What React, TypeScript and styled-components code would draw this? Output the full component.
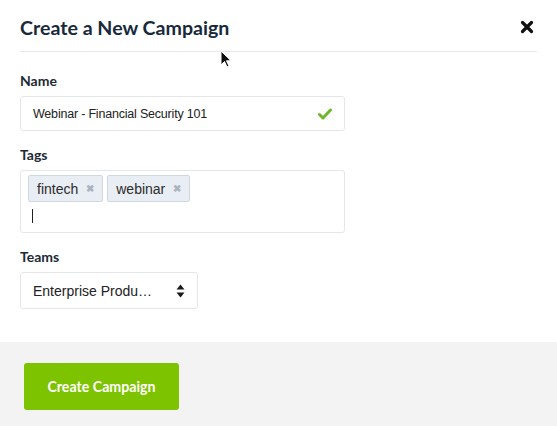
import React from "react";
import styled, { createGlobalStyle } from "styled-components";

const Global = createGlobalStyle`
  html, body { margin: 0; padding: 0; background: #fff; }
  body { width: 557px; height: 426px; overflow: hidden; font-family: "Liberation Sans", Arial, sans-serif; }
`;

const Modal = styled.div`
  position: relative;
  width: 557px;
  height: 426px;
  display: flex;
  flex-direction: column;
  background: #fff;
`;

const Header = styled.div`
  margin: 0 20px;
  height: 52px;
  border-bottom: 1px solid #e6e8ea;
  display: flex;
  align-items: center;
  justify-content: space-between;
  box-sizing: border-box;
  padding-top: 3px;
`;

const Title = styled.h1`
  margin: 0;
  font-family: Lato, "Open Sans", sans-serif;
  font-weight: 700;
  font-size: 19.6px;
  color: #17293a;
`;

const Close = styled.button`
  border: 0;
  background: none;
  padding: 0;
  width: 14px;
  height: 14px;
  margin-right: 3px;
  display: flex;
  cursor: pointer;
`;

const Body = styled.div`
  flex: 1;
  padding: 21px 20px 0;
  display: flex;
  flex-direction: column;
`;

const Field = styled.div`
  display: flex;
  flex-direction: column;
  margin-bottom: 16px;
`;

const Label = styled.label`
  font-family: Lato, "Open Sans", sans-serif;
  font-weight: 700;
  font-size: 14px;
  color: #1d2a35;
  line-height: 16px;
  margin-bottom: 7px;
`;

const Box = styled.div<{ $w: number; $h: number; $fs: number }>`
  width: ${(p) => p.$w}px;
  height: ${(p) => p.$h}px;
  box-sizing: border-box;
  border: 1px solid #e4e7ea;
  border-radius: 3px;
  background: #fff;
  display: flex;
  align-items: center;
  padding: 0 12px;
  font-size: ${(p) => p.$fs}px;
  letter-spacing: ${(p) => (p.$fs < 13 ? "-0.2px" : "0")};
  color: #222;
`;

const Value = styled.span`
  flex: 1;
`;

const TagBox = styled.div`
  width: 325px;
  height: 63px;
  box-sizing: border-box;
  border: 1px solid #e4e7ea;
  border-radius: 3px;
  padding: 4px 7px;
  display: flex;
  flex-direction: column;
  gap: 7px;
`;

const TagRow = styled.div`
  display: flex;
  gap: 4px;
`;

const Tag = styled.span`
  height: 27px;
  box-sizing: border-box;
  background: #e9eef4;
  border: 1px solid #cfd8e2;
  border-radius: 2px;
  display: flex;
  align-items: center;
  padding: 0 8px;
  gap: 8px;
  font-size: 14px;
  color: #2b2b2b;
`;

const TagX = styled.span`
  font-size: 10px;
  color: #aab4c0;
  font-weight: 700;
  line-height: 1;
`;

const Caret = styled.span`
  display: block;
  width: 1px;
  height: 14px;
  margin-left: 4px;
  background: #222;
`;

const Footer = styled.div`
  height: 84px;
  background: #f3f3f4;
  padding: 21px 24px 0;
  box-sizing: border-box;
`;

const Button = styled.button`
  width: 155px;
  height: 47px;
  border: 0;
  border-radius: 3px;
  background: #7dc300;
  color: #fff;
  font-family: Lato, "Open Sans", sans-serif;
  font-weight: 700;
  font-size: 14.2px;
  cursor: pointer;
`;

const Pointer = styled.svg`
  position: absolute;
  left: 220px;
  top: 50px;
`;

export default function App() {
  return (
    <Modal>
      <Global />
      <Header>
        <Title>Create a New Campaign</Title>
        <Close aria-label="Close">
          <svg width="14" height="14" viewBox="0 0 14 14">
            <path d="M2.5 2.5 L11.5 11.5 M11.5 2.5 L2.5 11.5" stroke="#111" strokeWidth="3.2" strokeLinecap="round" />
          </svg>
        </Close>
      </Header>
      <Body>
        <Field>
          <Label>Name</Label>
          <Box $w={325} $h={35} $fs={12.5}>
            <Value>Webinar - Financial Security 101</Value>
            <svg width="14" height="12" viewBox="0 0 14 12">
              <path d="M1.5 6.5 L5 10 L12.5 2" fill="none" stroke="#6fb62b" strokeWidth="3" strokeLinecap="round" strokeLinejoin="round" />
            </svg>
          </Box>
        </Field>
        <Field>
          <Label>Tags</Label>
          <TagBox>
            <TagRow>
              <Tag>fintech<TagX>✖</TagX></Tag>
              <Tag>webinar<TagX>✖</TagX></Tag>
            </TagRow>
            <Caret />
          </TagBox>
        </Field>
        <Field>
          <Label>Teams</Label>
          <Box $w={178} $h={37} $fs={14}>
            <Value>Enterprise Produ…</Value>
            <svg width="9" height="14" viewBox="0 0 9 14">
              <path d="M4.5 0.5 L8.5 5.5 L0.5 5.5 Z M4.5 13.5 L8.5 8.5 L0.5 8.5 Z" fill="#1a1a1a" />
            </svg>
          </Box>
        </Field>
      </Body>
      <Footer>
        <Button>Create Campaign</Button>
      </Footer>
      <Pointer width="12" height="19" viewBox="0 0 12 19">
        <path d="M1 1 L1 15 L4.5 11.5 L7 17 L9 16 L6.5 10.8 L11 10.8 Z" fill="#111" stroke="#fff" strokeWidth="1" />
      </Pointer>
    </Modal>
  );
}
